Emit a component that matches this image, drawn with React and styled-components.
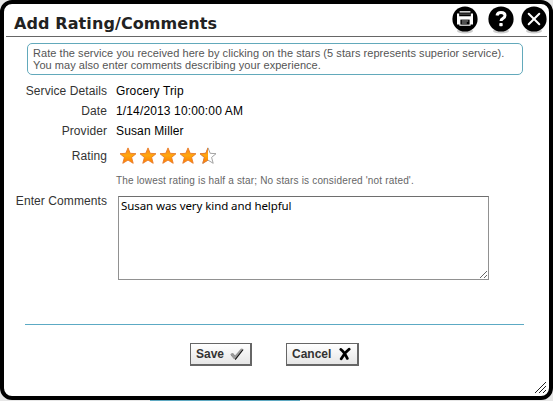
import React from "react";
import styled, { createGlobalStyle } from "styled-components";

const GlobalStyle = createGlobalStyle`
  * { box-sizing: border-box; }
  body {
    margin: 0;
    background: #e6e6e6;
    font-family: "Liberation Sans", Arial, sans-serif;
    overflow: hidden;
  }
`;

const Page = styled.div`
  width: 553px;
  height: 401px;
  display: flex;
  flex-direction: column;
  background: #e6e6e6;
`;

const Dialog = styled.section`
  position: relative;
  height: 400px;
  flex: none;
  display: flex;
  flex-direction: column;
  background: #fff;
  border: 4px solid #000;
  border-radius: 12px;
`;

const Backdrop = styled.div`
  height: 1px;
  margin-left: 150px;
  width: 150px;
  background: #5fa9c2;
`;

const Header = styled.header`
  height: 33px;
  flex: none;
  margin: 0 2px;
  padding-left: 8px;
  display: flex;
  justify-content: space-between;
  border-bottom: 1px solid #666;
`;

const Title = styled.h1`
  margin: 10px 0 0;
  font: bold 16px/20px "DejaVu Sans", Verdana, sans-serif;
  letter-spacing: 0.1px;
  color: #222;
  white-space: nowrap;
`;

const Tools = styled.div`
  display: flex;
  padding-top: 1px;
  margin-right: -1px;
`;

const ToolButton = styled.button`
  width: 28px;
  height: 30px;
  margin-left: ${(p) => p.$gap || 0}px;
  padding: 0;
  border: 0;
  background: none;
  svg { display: block; }
`;

const Notice = styled.p`
  width: 496px;
  height: 32px;
  flex: none;
  margin: 6px 0 0 23px;
  padding: 3px 0 0 5px;
  border: 1px solid #62a9bb;
  border-radius: 5px;
  font-size: 11px;
  line-height: 12px;
  letter-spacing: 0.05px;
  color: #555;
  white-space: nowrap;
`;

const Form = styled.div`
  margin-top: 6px;
  flex: none;
  display: grid;
  grid-template-columns: 103px 1fr;
  column-gap: 9px;
  grid-template-rows: 20px 20px 20px 30px 20px 94px;
`;

const Label = styled.label`
  font-size: 12px;
  line-height: 20px;
  letter-spacing: 0.08px;
  padding-top: ${(p) => p.$top || 0}px;
  text-align: right;
  color: #333;
  white-space: nowrap;
`;

const Value = styled.span`
  font-size: 12px;
  line-height: 20px;
  letter-spacing: 0.14px;
  color: #000;
`;

const Stars = styled.div`
  display: flex;
  gap: 2px;
  padding: 6px 0 0 3px;
  svg { display: block; }
`;

const Hint = styled.div`
  grid-column: 2;
  font-size: 10px;
  line-height: 20px;
  letter-spacing: 0.17px;
  color: #666;
  white-space: nowrap;
`;

const Comments = styled.textarea`
  width: 371px;
  height: 84px;
  margin: 5px 0 0 2px;
  padding: 2px;
  border: 1px solid #919191;
  border-top-color: #6e6e6e;
  border-radius: 0;
  outline: 0;
  resize: none;
  background: #fff;
  font: 11.5px/14px "Noto Sans", "Lucida Grande", sans-serif;
  letter-spacing: -0.08px;
  color: #000;
`;

const CommentsBox = styled.div`
  position: relative;
  width: 373px;
  height: 90px;
`;

const Grip = styled.svg`
  position: absolute;
  right: ${(p) => p.$right}px;
  bottom: ${(p) => p.$bottom}px;
`;

const Divider = styled.div`
  width: 499px;
  flex: none;
  margin: 39px 0 0 21px;
  border-top: 1px solid #5caac4;
`;

const Actions = styled.div`
  display: flex;
  gap: 34px;
  margin: 18px 0 0 186px;
`;

const ActionButton = styled.button`
  width: ${(p) => p.$width}px;
  height: 23px;
  display: flex;
  align-items: center;
  justify-content: space-between;
  padding: 0 6px 0 5px;
  border: solid #666;
  border-width: 1px 2px 2px 1px;
  border-radius: 0;
  background: linear-gradient(#fff, #e6e6e6);
  font: bold 12px/14px "Liberation Sans", Arial, sans-serif;
  color: #333;
`;

function ToolIcon({ children }) {
  return (
    <svg width="28" height="30" viewBox="0 0 28 30">
      <ellipse cx="14" cy="26" rx="8" ry="2.6" fill="#000" opacity=".2" />
      <circle cx="14" cy="14" r="12.6" fill="#000" />
      {children}
    </svg>
  );
}

const starPath =
  "M9 .9 L11.2 6.3 L17 6.7 L12.6 10.4 L14.2 16.3 L9 13.1 L3.8 16.3 L5.4 10.4 L1 6.7 L6.8 6.3 Z";

function Star({ half }) {
  return (
    <svg width="18" height="18" viewBox="0 0 18 18">
      <defs>
        <linearGradient id="gold" x1="0" y1="0" x2="0" y2="1">
          <stop offset="0" stopColor="#ff8a14" />
          <stop offset=".5" stopColor="#ffa60f" />
          <stop offset="1" stopColor="#ff7c00" />
        </linearGradient>
        <clipPath id="leftHalf"><rect width="9" height="18" /></clipPath>
      </defs>
      {half && <path d={starPath} fill="#fff" stroke="#999" strokeWidth=".9" />}
      <g clipPath={half ? "url(#leftHalf)" : undefined}>
        <path d={starPath} fill="url(#gold)" stroke="#e87a28" strokeWidth=".9" strokeLinejoin="round" />
      </g>
    </svg>
  );
}

export default function App() {
  return (
    <Page>
      <GlobalStyle />
      <Dialog>
        <Header>
          <Title>Add Rating/Comments</Title>
          <Tools>
            <ToolButton aria-label="Print">
              <ToolIcon>
                <path d="M8.6 6.2h10.8v1.3H8.6z" fill="#fff" />
                <path d="M6 8.6h2.2v2.7h11.6V8.6H22v11h-2.4v1.2H8.4v-1.2H6z" fill="#fff" />
                <path d="M8.6 8.6h10.8v1.1H8.6z" fill="#555" />
                <path d="M9.4 14.6h9.2v5H9.4z" fill="#000" />
                <path d="M10.8 16h6.4M10.8 18h5" stroke="#ccc" strokeWidth=".8" />
              </ToolIcon>
            </ToolButton>
            <ToolButton aria-label="Help" $gap={8}>
              <ToolIcon>
                <path d="M10 10.4Q10.5 7.4 14 7.4Q18 7.4 18 10.5Q18 12.3 16 13.3Q14 14.3 14 16" fill="none" stroke="#fff" strokeWidth="3" />
                <rect x="12.3" y="18" width="3.4" height="3.2" rx=".8" fill="#fff" />
              </ToolIcon>
            </ToolButton>
            <ToolButton aria-label="Close" $gap={5}>
              <ToolIcon>
                <path d="M8.7 8.7l10.6 10.6M19.3 8.7L8.7 19.3" stroke="#fff" strokeWidth="2" strokeLinecap="round" />
              </ToolIcon>
            </ToolButton>
          </Tools>
        </Header>
        <Notice>
          Rate the service you received here by clicking on the stars (5 stars represents superior service).
          <br />
          You may also enter comments describing your experience.
        </Notice>
        <Form>
          <Label>Service Details</Label>
          <Value>Grocery Trip</Value>
          <Label>Date</Label>
          <Value>1/14/2013 10:00:00 AM</Value>
          <Label>Provider</Label>
          <Value>Susan Miller</Value>
          <Label $top={5}>Rating</Label>
          <Stars>
            <Star />
            <Star />
            <Star />
            <Star />
            <Star half />
          </Stars>
          <Hint>The lowest rating is half a star; No stars is considered 'not rated'.</Hint>
          <Label htmlFor="comments">Enter Comments</Label>
          <CommentsBox>
            <Comments id="comments" spellCheck={false} defaultValue="Susan was very kind and helpful" />
            <Grip $right={1} $bottom={2} width="9" height="9" viewBox="0 0 9 9">
              <path d="M1 8L8 1M5 8L8 5" stroke="#555" strokeWidth=".9" />
            </Grip>
          </CommentsBox>
        </Form>
        <Divider />
        <Actions>
          <ActionButton $width={62}>
            Save
            <svg width="14" height="14" viewBox="0 0 14 14">
              <path d="M1 8.2L3 6.6L5.3 9.2L11.7 2L13.6 2.8L5.6 13Z" fill="#111" />
              <path d="M.3 7.6Q1.5 5.5 3 6.3L5 8.5L10.8 1.8Q12.2 1 12.9 1.9L5 11.9Q4 12.4 3.4 11.5Z" fill="#999" />
            </svg>
          </ActionButton>
          <ActionButton $width={73}>
            Cancel
            <svg width="13" height="14" viewBox="0 0 13 14">
              <path d="M2.8 2.4Q5.8 4.3 9.3 11.4M11.2 2.2Q6.5 5.6 3.2 11.8" fill="none" stroke="#000" strokeWidth="2.8" strokeLinecap="round" />
            </svg>
          </ActionButton>
        </Actions>
        <Grip $right={2} $bottom={2} width="13" height="13" viewBox="0 0 13 13">
          <path d="M1 12L12 1M5 12L12 5M9 12L12 9" stroke="#222" strokeWidth="1" />
        </Grip>
      </Dialog>
      <Backdrop />
    </Page>
  );
}
